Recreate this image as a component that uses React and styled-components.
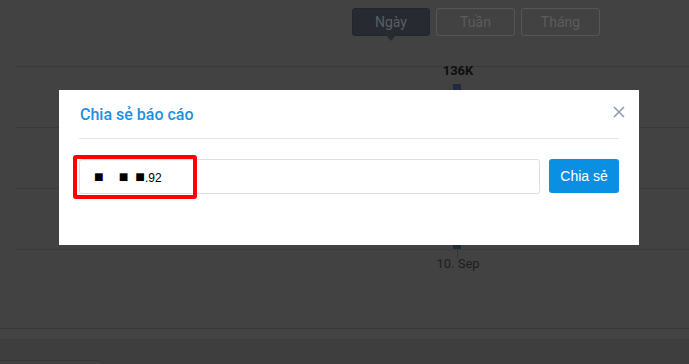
import React from "react";
import styled, { createGlobalStyle } from "styled-components";

const Global = createGlobalStyle`
  html, body { margin: 0; padding: 0; background: #424242; }
  body { font-family: "Liberation Sans", Arial, sans-serif; overflow: hidden; }
  * { box-sizing: border-box; }
`;

const Page = styled.div`
  width: 689px;
  height: 364px;
  background: #424242;
  display: flex;
  flex-direction: column;
`;

const Main = styled.section`
  flex: none;
  height: 328px;
  display: flex;
  flex-direction: column;
`;

const TopBar = styled.div`
  height: 60px;
  padding: 8px 89px 0 0;
  display: flex;
  justify-content: flex-end;
  gap: 6px;
`;

const Tab = styled.button`
  position: relative;
  width: ${(p) => (p.$active ? "78px" : "79px")};
  height: 28px;
  border-radius: 3px;
  border: 1px solid ${(p) => (p.$active ? "#23272c" : "#555657")};
  background: ${(p) => (p.$active ? "#272b31" : "transparent")};
  color: ${(p) => (p.$active ? "#5a5e63" : "#5c5c5c")};
  font-family: "Liberation Sans Narrow", "Roboto", sans-serif;
  font-size: 14px;
  padding: 0;
  cursor: pointer;
  &::after {
    content: "";
    display: ${(p) => (p.$active ? "block" : "none")};
    position: absolute;
    left: 50%;
    bottom: -6px;
    margin-left: -5px;
    border-left: 5px solid transparent;
    border-right: 5px solid transparent;
    border-top: 6px solid #272b31;
  }
`;

const Chart = styled.svg`
  display: block;
  margin-left: 15px;
  flex: none;
`;

const Footer = styled.div`
  flex: 1;
  display: flex;
  flex-direction: column;
  border-top: 1px solid #373737;
`;

const Band = styled.div`
  height: 10px;
  background: #444444;
`;

const FooterBody = styled.div`
  flex: 1;
  background: #3e3e3f;
  padding-top: 21px;
`;

const FooterCard = styled.div`
  width: 103px;
  height: 20px;
  border: 1px solid #383838;
  border-left: none;
  border-radius: 0 3px 0 0;
  background: #404040;
`;

const Modal = styled.div`
  position: fixed;
  left: 59px;
  top: 90px;
  width: 580px;
  height: 155px;
  background: #ffffff;
  padding: 15px 20px 0;
`;

const Header = styled.div`
  display: flex;
  justify-content: space-between;
  align-items: flex-start;
  padding-bottom: 13px;
  border-bottom: 1px solid #e2e7ee;
`;

const Title = styled.h4`
  margin: 0 0 0 1px;
  font-family: "Roboto", "Liberation Sans", sans-serif;
  font-weight: 500;
  font-size: 16px;
  line-height: 20px;
  color: #1b8fe0;
`;

const Close = styled.button`
  width: 12px;
  height: 12px;
  margin: 1px -6px 0 0;
  padding: 0;
  border: none;
  background: none;
  display: flex;
  cursor: pointer;
`;

const Body = styled.div`
  margin-top: 20px;
  display: flex;
  gap: 9px;
  align-items: flex-start;
`;

const InputWrap = styled.div`
  position: relative;
  flex: 1;
`;

const Field = styled.div`
  display: flex;
  align-items: center;
  height: 35px;
  border: 1px solid #dcdfe5;
  border-radius: 3px;
  padding: 1px 0 0 14px;
  font-family: "Liberation Sans", Arial, sans-serif;
  font-size: 12px;
  color: #000;
  white-space: pre;
`;

const Value = styled.span`
  line-height: 16px;
`;

const Mask = styled.span`
  font-size: 16px;
  margin-right: ${(p) => p.$gap}px;
`;

const Highlight = styled.div`
  position: absolute;
  left: -6px;
  top: -4px;
  width: 124px;
  height: 44px;
  border: 4px solid #ff0000;
  border-radius: 3px;
  pointer-events: none;
`;

const ShareButton = styled.button`
  width: 70px;
  height: 34px;
  border: none;
  border-radius: 3px;
  background: #0b8fe2;
  color: #ffffff;
  font-family: "Liberation Sans", Arial, sans-serif;
  font-size: 14px;
  padding: 0;
  cursor: pointer;
`;

export default function App() {
  const grid = [6, 67, 128, 189];
  return (
    <>
      <Global />
      <Page>
        <Main>
          <TopBar>
            <Tab $active>Ngày</Tab>
            <Tab>Tuần</Tab>
            <Tab>Tháng</Tab>
          </TopBar>
          <Chart width="674" height="216" viewBox="0 0 674 216">
            {grid.map((y) => (
              <line key={y} x1="0" x2="674" y1={y + 0.5} y2={y + 0.5} stroke="#3a3a3a" strokeWidth="1" />
            ))}
            <rect x="438" y="24" width="8" height="165" fill="#1f2b3a" />
            <text x="443" y="15" textAnchor="middle" fontFamily="Liberation Sans Narrow, Roboto, sans-serif" fontWeight="bold" fontSize="13" fill="#0e0e0e">136K</text>
            <line x1="442.5" x2="442.5" y1="190" y2="198" stroke="#353535" />
            <text x="443" y="208" textAnchor="middle" fontFamily="Liberation Sans Narrow, Roboto, sans-serif" fontSize="13" fill="#1f1f1f">10. Sep</text>
          </Chart>
        </Main>
        <Footer>
          <Band />
          <FooterBody>
            <FooterCard />
          </FooterBody>
        </Footer>
      </Page>
      <Modal>
        <Header>
          <Title>Chia sẻ báo cáo</Title>
          <Close aria-label="Đóng">
            <svg width="12" height="12" viewBox="0 0 12 12">
              <path d="M1 1 L11 11 M11 1 L1 11" stroke="#8e9dad" strokeWidth="1.6" fill="none" />
            </svg>
          </Close>
        </Header>
        <Body>
          <InputWrap>
            <Field role="textbox" aria-readonly="true">
              <Value>
                <Mask $gap={15}>■</Mask>
                <Mask $gap={7}>■</Mask>
                <Mask $gap={0}>■</Mask>.92
              </Value>
            </Field>
            <Highlight />
          </InputWrap>
          <ShareButton>Chia sẻ</ShareButton>
        </Body>
      </Modal>
    </>
  );
}
